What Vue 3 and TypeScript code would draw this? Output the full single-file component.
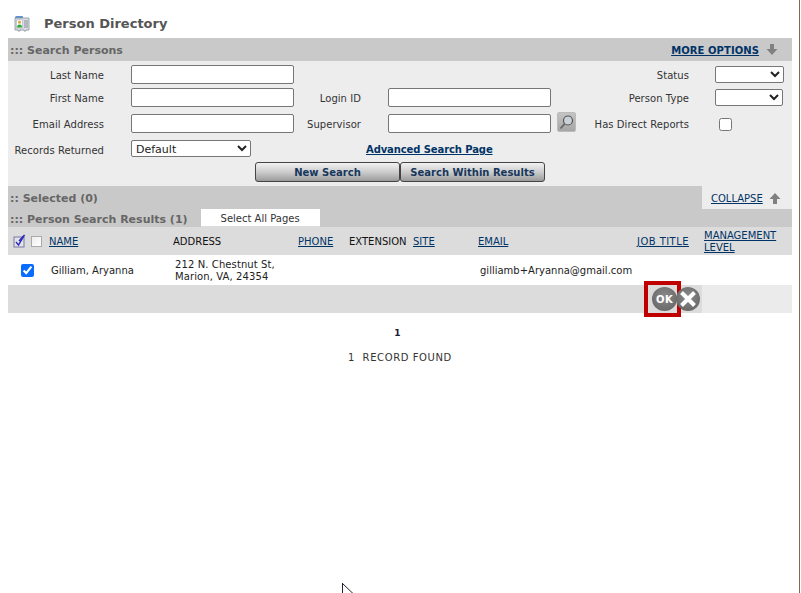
<script setup lang="ts">
interface Col { label: string; link: boolean; wide?: boolean }
const cols: Col[] = [
  { label: 'NAME', link: true },
  { label: 'ADDRESS', link: false },
  { label: 'PHONE', link: true },
  { label: 'EXTENSION', link: false },
  { label: 'SITE', link: true },
  { label: 'EMAIL', link: true },
  { label: 'JOB TITLE', link: true, wide: true },
  { label: 'MANAGEMENT LEVEL', link: true },
]
</script>

<template>
  <div class="page">
    <header class="title">
      <svg class="title-icon" width="16" height="17" viewBox="0 0 16 17">
        <path d="M1 2.5 Q1 1 2.5 1 H8 Q9 1 9 2 V3 H1Z" fill="#5b8fd6" />
        <path d="M1 3 H15 V15 H12 V16 H10 V15 H6 V16 H4 V15 H1Z" fill="#d9dde3" stroke="#8c929c" stroke-width=".8" />
        <rect x="2.5" y="5" width="6" height="8" fill="#fff" stroke="#9aa" stroke-width=".5" />
        <circle cx="5.5" cy="7.3" r="1.5" fill="#d9a441" />
        <path d="M3 12.6 Q3 9.6 5.5 9.6 Q8 9.6 8 12.6Z" fill="#2fa83a" />
        <path d="M10 6 H14 M10 8 H14 M10 10 H14 M10 12 H14" stroke="#8c929c" stroke-width="1" />
      </svg>
      <h1>Person Directory</h1>
    </header>

    <section class="search">
      <div class="bar">
        <h2>::: Search Persons</h2>
        <div class="more">
          <a href="#" class="link strong">MORE OPTIONS</a>
          <svg width="12" height="11" viewBox="0 0 12 11"><path d="M4 0 H8 V5 H11.5 L6 11 L.5 5 H4Z" fill="#808080" /></svg>
        </div>
      </div>

      <div class="form">
        <label class="l1">Last Name</label>
        <input class="input i1" type="text" />
        <label class="l3">Status</label>
        <select class="sel s1"></select>

        <label class="l1">First Name</label>
        <input class="input i1" type="text" />
        <label class="l2">Login ID</label>
        <input class="input i2" type="text" />
        <label class="l3">Person Type</label>
        <select class="sel s2"></select>

        <label class="l1">Email Address</label>
        <input class="input i1" type="text" />
        <label class="l2">Supervisor</label>
        <input class="input i2 up" type="text" />
        <button class="lookup" type="button" aria-label="Search">
          <svg width="17" height="17" viewBox="0 0 17 17">
            <circle cx="10" cy="6.5" r="4.5" fill="#c9d0d6" stroke="#555" stroke-width="1.2" />
            <path d="M6.6 9.8 L2.5 14.5" stroke="#666" stroke-width="1.8" />
          </svg>
        </button>
        <label class="l3">Has Direct Reports</label>
        <input class="check" type="checkbox" />

        <label class="l1">Records Returned</label>
        <select class="sel records"><option>Default</option></select>
        <a href="#" class="link strong adv">Advanced Search Page</a>
      </div>

      <div class="buttons">
        <button class="btn" type="button">New Search</button>
        <button class="btn" type="button">Search Within Results</button>
      </div>
    </section>

    <section class="selected">
      <div class="sel-title">
        <h2>:: Selected (0)</h2>
      </div>
      <div class="collapse">
        <a href="#" class="link">COLLAPSE</a>
        <svg width="12" height="11" viewBox="0 0 12 11"><path d="M6 0 L11.5 6 H8 V11 H4 V6 H.5Z" fill="#808080" /></svg>
      </div>
    </section>

    <section class="results">
      <div class="res-bar">
        <h2>::: Person Search Results (1)</h2>
        <div class="tab">Select All Pages</div>
      </div>

      <div class="grid head">
        <div class="checks">
          <svg width="13" height="14" viewBox="0 0 13 14">
            <rect x="1" y="3" width="10" height="10" fill="#e4e4e4" stroke="#7777aa" />
            <path d="M3 8 L5.5 11 L11.5 1 L6 7" fill="none" stroke="#2a2ac0" stroke-width="1.4" />
          </svg>
          <span class="blank"></span>
        </div>
        <div v-for="c in cols" :key="c.label" class="hcell" :class="{ wide: c.wide }">
          <a v-if="c.link" href="#" class="link">{{ c.label }}</a>
          <span v-else class="plain">{{ c.label }}</span>
        </div>
      </div>

      <div class="grid row">
        <div class="rowcheck"><input class="tick" type="checkbox" checked /></div>
        <div class="cell">Gilliam, Aryanna</div>
        <div class="cell addr">212 N. Chestnut St,<br />Marion, VA, 24354</div>
        <div></div>
        <div></div>
        <div></div>
        <div class="cell email">gilliamb+Aryanna@gmail.com</div>
        <div></div>
        <div></div>
      </div>

      <div class="actions">
        <div class="act-main">
          <div class="ok-wrap">
            <button class="round ok" type="button">OK</button>
          </div>
          <button class="round cancel" type="button" aria-label="Cancel">
            <svg width="18" height="18" viewBox="0 0 18 18"><path d="M2.5 2.5 L15.5 15.5 M15.5 2.5 L2.5 15.5" stroke="#fff" stroke-width="4" /></svg>
          </button>
        </div>
        <div class="act-side"></div>
      </div>
    </section>

    <div class="pager">1</div>
    <div class="found">1&nbsp; RECORD FOUND</div>

    <svg class="cursor" width="12" height="11" viewBox="0 0 12 11"><path d="M.5 0 V11 M.5 .5 L11 10.5" fill="none" stroke="#223" stroke-width="1" /></svg>
    <div class="edge"></div>
  </div>
</template>

<style scoped>
.page {
  position: relative;
  box-sizing: border-box;
  width: 801px;
  height: 593px;
  padding: 0 9px 0 8px;
  overflow: hidden;
  background: #fff;
  font-family: "DejaVu Sans", Verdana, sans-serif;
  font-size: 10px;
  color: #333;
}
h1, h2 { margin: 0; }
.title {
  display: flex;
  align-items: center;
  height: 38px;
  padding: 9px 0 0 6px;
  box-sizing: border-box;
  gap: 14px;
}
.title-icon { flex: none; }
h1 { font-size: 13px; font-weight: 700; color: #555; }
h2 { font-size: 11px; font-weight: 700; color: #666; padding-top: 2px; }

.bar {
  display: flex;
  justify-content: space-between;
  align-items: center;
  height: 23px;
  padding: 0 14px 0 2px;
  background: #c9c9c9;
}
.more { display: flex; align-items: center; gap: 7px; }
.more .link { letter-spacing: .08px; padding-top: 1px; }
.link { color: #003366; text-decoration: underline; }
.strong { font-weight: 700; }

.search { background: #ededed; height: 148px; }
.form {
  display: grid;
  grid-template-columns: 96px 27px 163px 67px 27px 163px 6px 19px 113px 26px 77px;
  grid-template-rows: 23px 26px 26px 22px;
  padding-top: 4px;
  align-items: start;
}
label { line-height: 21px; text-align: right; white-space: nowrap; letter-spacing: .05px; }
.l1 { grid-column: 1; }
.l2 { grid-column: 4; }
.l3 { grid-column: 9; }
.i1 { grid-column: 3; }
.i2 { grid-column: 6; }
.up { margin-top: -2px; }
.input {
  box-sizing: border-box;
  width: 163px;
  height: 19px;
  margin: 0;
  padding: 0 4px;
  border: 1px solid #767676;
  border-radius: 2px;
  background: #fff;
}
.sel {
  box-sizing: border-box;
  grid-column: 11;
  height: 17px;
  margin: 1px 0 0;
  border: 1px solid #767676;
  border-radius: 2px;
  background: #fff;
  font-family: inherit;
  font-size: 11px;
  color: #222;
}
.s1 { width: 69px; }
.s2 { width: 68px; }
.records {
  grid-column: 3;
  width: 120px;
  margin-top: 0;
  padding: 1px 0 0;
}
.lookup {
  grid-column: 8;
  box-sizing: border-box;
  width: 19px;
  height: 20px;
  margin-top: -2px;
  padding: 0;
  display: flex;
  align-items: center;
  justify-content: center;
  border: 1px solid #bbb;
  border-radius: 2px;
  background: linear-gradient(#c4c4c4, #a6a6a6);
}
.check {
  grid-column: 11;
  width: 13px;
  height: 13px;
  margin: 4px 0 0 4px;
}
.adv {
  grid-column: 5 / span 4;
  margin-left: 5px;
  line-height: 19px;
  white-space: nowrap;
  font-size: 10px;
  letter-spacing: -.1px;
  justify-self: start;
}
.buttons {
  display: flex;
  padding-left: 247px;
}
.btn {
  box-sizing: border-box;
  width: 145px;
  height: 20px;
  margin: 0;
  padding: 0;
  border: 1px solid #444;
  border-radius: 3px;
  background: linear-gradient(#f2f2f2, #c8c8c8 55%, #9a9a9a);
  font-family: inherit;
  font-size: 10px;
  font-weight: 700;
  color: #16375c;
}
.selected {
  display: flex;
  height: 23px;
}
.sel-title {
  flex: 1;
  display: flex;
  align-items: center;
  padding-left: 2px;
  background: #c9c9c9;
}
.collapse {
  width: 90px;
  box-sizing: border-box;
  display: flex;
  align-items: center;
  gap: 6px;
  padding: 2px 0 0 9px;
  background: #ededed;
}
.res-bar {
  display: flex;
  align-items: center;
  height: 18px;
  padding-left: 2px;
  background: #c9c9c9;
}
.tab {
  box-sizing: border-box;
  width: 119px;
  height: 18px;
  margin-left: 13px;
  padding-top: 1px;
  line-height: 17px;
  text-align: center;
  background: #fff;
  border-bottom: 1px solid #ddd;
  color: #333;
}
.grid {
  display: grid;
  grid-template-columns: 41px 124px 125px 51px 64px 65px 159px 67px 88px;
  align-items: center;
}
.head { height: 28px; background: #dcdcdc; }
.checks { display: flex; align-items: center; gap: 5px; padding-left: 5px; }
.blank {
  box-sizing: border-box;
  width: 11px;
  height: 11px;
  border: 1px solid #aaa;
  background: linear-gradient(135deg, #eee, #fff);
}
.plain { color: #111; }
.hcell { line-height: 12px; padding-top: 2px; }
.wide { letter-spacing: .45px; }
.row { height: 30px; background: #fff; }
.rowcheck { display: flex; padding-left: 13px; }
.tick { width: 13px; height: 13px; margin: 0; accent-color: #0a6cff; }
.cell { padding: 2px 0 0 2px; line-height: 12px; color: #222; white-space: nowrap; }
.addr { padding-top: 1px; letter-spacing: .1px; }
.actions { display: flex; height: 28px; }
.act-main {
  flex: 1;
  display: flex;
  justify-content: flex-end;
  align-items: center;
  padding-right: 2px;
  background: #dcdcdc;
}
.act-side { width: 90px; background: #ebebeb; }
.ok-wrap {
  position: relative;
  box-sizing: border-box;
  width: 37px;
  height: 36px;
  margin-right: -5px;
  display: flex;
  align-items: center;
  justify-content: flex-end;
  border: 4px solid #c00000;
  z-index: 1;
}
.round {
  box-sizing: border-box;
  width: 24px;
  height: 24px;
  padding: 0;
  border: 0;
  border-radius: 50%;
  display: flex;
  align-items: center;
  justify-content: center;
  background: radial-gradient(circle at 50% 40%, #8a8a8a, #6a6a6a 75%);
  color: #fff;
  font-family: inherit;
  font-size: 10px;
  font-weight: 700;
}
.ok { width: 25px; letter-spacing: .5px; }
.cancel { position: relative; z-index: 2; }
.pager {
  margin-top: 14px;
  padding-right: 5px;
  line-height: 12px;
  text-align: center;
  font-size: 9px;
  font-weight: 700;
  color: #1a1a3a;
}
.found {
  margin-top: 13px;
  line-height: 12px;
  text-align: center;
  letter-spacing: .6px;
  color: #333;
}
.cursor { position: absolute; left: 342px; top: 583px; }
.edge {
  position: absolute;
  left: 799px;
  top: 0;
  width: 1px;
  height: 100%;
  background: #7d6a50;
}
</style>
